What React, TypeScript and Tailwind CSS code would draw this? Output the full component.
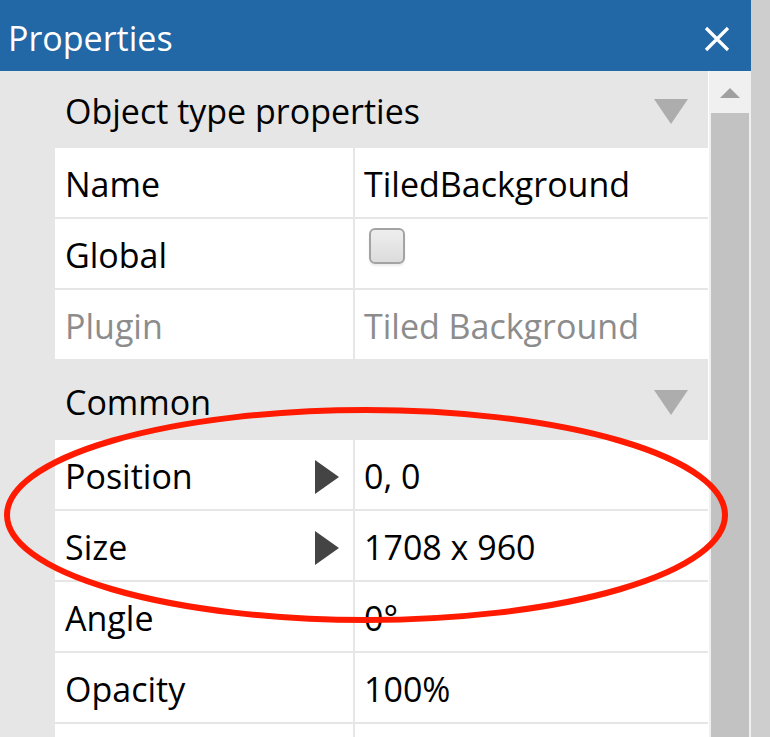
import React from "react";

const font = { fontFamily: '"Open Sans", "Noto Sans", sans-serif' };

function RightArrow() {
  return (
    <svg width="24" height="34" viewBox="0 0 24 34" className="shrink-0">
      <polygon points="0,0 24,17 0,34" fill="#444444" />
    </svg>
  );
}

function DownArrow() {
  return (
    <svg width="34" height="25" viewBox="0 0 34 25" className="shrink-0">
      <polygon points="0,0 34,0 17,25" fill="#adadad" />
    </svg>
  );
}

function Header({ title, h }: { title: string; h: string }) {
  return (
    <div className={`flex shrink-0 items-center justify-between pl-[10px] pr-[20px] pt-[3px] text-[34px] text-black ${h}`}>
      <span>{title}</span>
      <DownArrow />
    </div>
  );
}

function Row({
  name,
  value,
  muted,
  expand,
  checkbox,
}: {
  name: string;
  value?: string;
  muted?: boolean;
  expand?: boolean;
  checkbox?: boolean;
}) {
  const color = muted ? "text-[#8c8c8c]" : "text-black";
  return (
    <div className="grid h-[69px] shrink-0 grid-cols-[298px_1fr] gap-[2px]">
      <div className={`flex items-center justify-between bg-white pl-[10px] pr-[14px] pt-[4px] text-[34px] ${color}`}>
        <span>{name}</span>
        {expand && <RightArrow />}
      </div>
      <div className={`flex bg-white pl-[9px] text-[34px] ${color} ${checkbox ? "items-start pt-[9px] pl-[14px]" : "items-center pt-[4px]"}`}>
        {checkbox ? (
          <div className="h-[36px] w-[36px] rounded-[6px] border-2 border-[#a3a3a3] bg-gradient-to-b from-[#eeeeee] to-[#dcdcdc] shadow-[0_2px_2px_rgba(0,0,0,0.08)]" />
        ) : (
          <span>{value}</span>
        )}
      </div>
    </div>
  );
}

export default function App() {
  return (
    <div className="relative flex h-[737px] w-[770px] overflow-hidden bg-[#cecece]" style={font}>
      <div className="flex w-[751px] flex-col">
        <div className="flex h-[71px] shrink-0 items-center justify-between bg-[#2267a6] pl-[8px] pr-[21px] pt-[6px] text-[34px] text-white">
          <span>Properties</span>
          <svg width="26" height="26" viewBox="0 0 26 26">
            <path d="M2 2 L24 24 M24 2 L2 24" stroke="#ffffff" strokeWidth="3.2" />
          </svg>
        </div>
        <div className="flex min-h-0 flex-1 overflow-hidden">
          <div className="flex flex-1 flex-col bg-[#e6e6e6] pl-[55px]">
            <Header title="Object type properties" h="h-[77px]" />
            <div className="flex flex-col gap-[2px]">
              <Row name="Name" value="TiledBackground" />
              <Row name="Global" checkbox />
              <Row name="Plugin" value="Tiled Background" muted />
            </div>
            <Header title="Common" h="h-[79px] mt-[2px]" />
            <div className="flex flex-col gap-[2px]">
              <Row name="Position" value="0, 0" expand />
              <Row name="Size" value="1708 x 960" expand />
              <Row name="Angle" value="0°" />
              <Row name="Opacity" value="100%" />
              <Row name="" value="" />
            </div>
          </div>
          <div className="flex w-[43px] flex-col border-l border-white bg-[#f0f0f0]">
            <div className="flex h-[42px] shrink-0 items-start justify-center pt-[17px]">
              <svg width="20" height="10" viewBox="0 0 20 10">
                <polygon points="0,10 20,10 10,0" fill="#a0a0a0" />
              </svg>
            </div>
            <div className="mx-[2px] flex-1 bg-[#c2c2c2]" />
          </div>
        </div>
      </div>
      <svg className="pointer-events-none absolute left-0 top-0" width="770" height="737">
        <ellipse cx="366" cy="515" rx="359" ry="105" fill="none" stroke="#ff1a00" strokeWidth="6" />
      </svg>
    </div>
  );
}
